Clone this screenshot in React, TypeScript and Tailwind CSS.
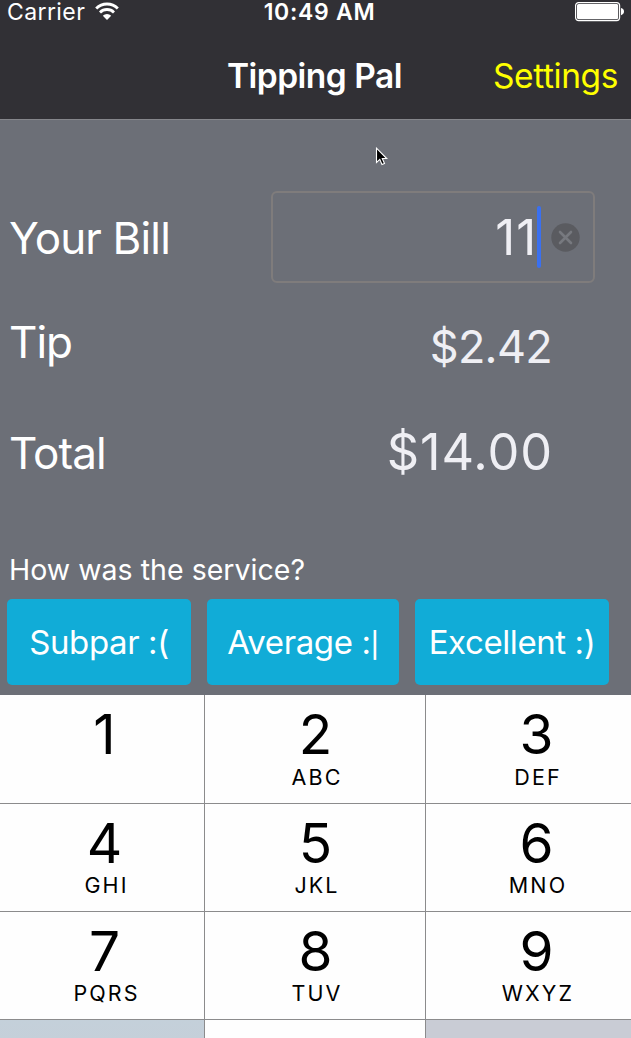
const rows = [
  [
    { digit: '1', letters: '' },
    { digit: '2', letters: 'ABC' },
    { digit: '3', letters: 'DEF' },
  ],
  [
    { digit: '4', letters: 'GHI' },
    { digit: '5', letters: 'JKL' },
    { digit: '6', letters: 'MNO' },
  ],
  [
    { digit: '7', letters: 'PQRS' },
    { digit: '8', letters: 'TUV' },
    { digit: '9', letters: 'WXYZ' },
  ],
];

const digitOffsets = ['pl-[5px]', 'pl-px', 'pl-px'];
const letterOffsets = ['pl-[9px]', 'pl-1', 'pl-1'];

function WifiIcon() {
  return (
    <svg className="-mt-[3px] ml-[10px] h-[18px] w-[24px]" viewBox="0 0 24 18" fill="none" stroke="white">
      <path d="M1.200 6.500a15.300 15.300 0 0 1 21.600 0" strokeWidth="2.900" />
      <path d="M5 10.400a9.900 9.900 0 0 1 14 0" strokeWidth="2.800" />
      <path d="M12 18l-4.200-4.200a6 6 0 0 1 8.400 0z" fill="white" stroke="none" />
    </svg>
  );
}

function BatteryIcon() {
  return (
    <svg className="h-[20px] w-[50px]" viewBox="0 0 50 20">
      <rect x="0.6" y="0.6" width="44" height="18" rx="3" fill="none" stroke="white" strokeWidth="1.2" />
      <rect x="2" y="2" width="41.2" height="15.2" rx="1.6" fill="white" />
      <path d="M46 6c2 .4 3 1.800 3 3.600s-1 3.200-3 3.600z" fill="white" />
    </svg>
  );
}

function Header() {
  return (
    <header className="h-[120px] shrink-0 border-b border-[#85868b] bg-[#313035] text-white">
      <div className="grid h-6 grid-cols-[1fr_auto_1fr] items-center text-[23px] leading-6">
        <div className="flex items-center pl-[7px]">
          <span className="tracking-[0.4px]">Carrier</span>
          <WifiIcon />
        </div>
        <span className="pl-[8px] font-semibold tracking-[0.7px]">10:49 AM</span>
        <div className="flex justify-end pr-[6px]">
          <BatteryIcon />
        </div>
      </div>
      <nav className="grid h-[95px] grid-cols-[1fr_auto_1fr] items-center pt-[8px] text-[33.5px] leading-10">
        <span />
        <h1 className="pr-[2px] font-semibold tracking-[-0.5px]">Tipping Pal</h1>
        <button className="justify-self-end pr-[13px] tracking-[-0.4px] text-[#ffff00]">Settings</button>
      </nav>
    </header>
  );
}

export default function App() {
  return (
    <div className="relative flex h-[1038px] w-[631px] flex-col overflow-hidden bg-[#6c6f77] font-['Inter',sans-serif]">
      <Header />
      <main className="h-[575px] shrink-0 pt-[71px] text-white">
        <div className="flex h-[92px] items-center justify-between pr-9 pl-[9px]">
          <label className="pt-[2px] text-[44px] leading-[60px] tracking-[-0.85px]">Your Bill</label>
          <div className="flex h-[92px] w-[324px] items-center justify-end rounded-[6px] border-2 border-[#7f7c7c] pr-[13px]">
            <span className="pt-[2px] text-[49px] leading-[60px] tracking-[0.9px] text-[#efeff4]">11</span>
            <span className="h-[62px] w-1 rounded-sm bg-[#3a70f0]" />
            <svg className="mt-px ml-[10px] h-[29px] w-[29px]" viewBox="0 0 29 29">
              <circle cx="14.500" cy="14.500" r="14.200" fill="#5a5b60" />
              <path d="M9 9l11 11M20 9L9 20" stroke="#77797f" strokeWidth="2.600" strokeLinecap="round" />
            </svg>
          </div>
        </div>
        <div className="mt-[29px] flex h-[60px] justify-between pr-[79px] pl-[9px]">
          <span className="text-[44px] leading-[60px] tracking-[-1px]">Tip</span>
          <span className="pt-[5px] text-[45px] leading-[60px] tracking-[-0.7px] text-[#efeff4]">$2.42</span>
        </div>
        <div className="mt-[51px] flex h-[60px] justify-between pr-[78px] pl-[9px]">
          <span className="text-[44px] leading-[60px] tracking-[-0.9px]">Total</span>
          <span className="text-[50.5px] leading-[58px] tracking-[0.9px] text-[#efeff4]">$14.00</span>
        </div>
        <p className="mt-[67px] pl-[9px] text-[28.500px] leading-10 tracking-[0.03px]">How was the service?</p>
        <div className="mt-[9px] grid h-[86px] grid-cols-[184px_192px_194px] gap-4 pl-[7px] text-[33px] whitespace-nowrap [font-feature-settings:'calt'_0]">
          <button className="rounded-[5px] bg-[#11acd7] pt-[2px] tracking-[-0.4px]">Subpar :(</button>
          <button className="rounded-[5px] bg-[#11acd7] pt-[2px] tracking-[-0.4px]">
            Average :<span className="text-[25px] font-medium">|</span>
          </button>
          <button className="rounded-[5px] bg-[#11acd7] pt-[2px] tracking-[-0.4px]">Excellent :)</button>
        </div>
      </main>
      <section className="grid shrink-0 grid-cols-[204px_220px_220px] grid-rows-[108px_107px_107px_107px] gap-px bg-[#8b8b8c] text-black">
        {rows.map((row, rowIndex) =>
          row.map((key, column) => (
            <button key={key.digit} className="flex flex-col items-center bg-[#fefefe] pt-[9px]">
              <span className={`${digitOffsets[column]} text-[55px] leading-[60px]`}>{key.digit}</span>
              <span
                className={`${letterOffsets[column]} ${rowIndex === 0 ? 'pt-px' : 'pt-0'} text-[21.500px] leading-6 tracking-[2.1px]`}
              >
                {key.letters}
              </span>
            </button>
          )),
        )}
        <div className="bg-linear-to-b from-[#c4d0da] to-[#c9ccd5]" />
        <div className="bg-[#fefefe]" />
        <div className="bg-[#c9ccd5]" />
      </section>
      <svg className="absolute top-[147px] left-[375px] h-[20px] w-[14px]" viewBox="0 0 14 20">
        <path d="M1.500 1.200v14.300l3.300-3.100 2.200 5.100 2.500-1.100-2.200-4.900h4.400z" fill="black" stroke="white" strokeWidth="1.100" />
      </svg>
    </div>
  );
}
